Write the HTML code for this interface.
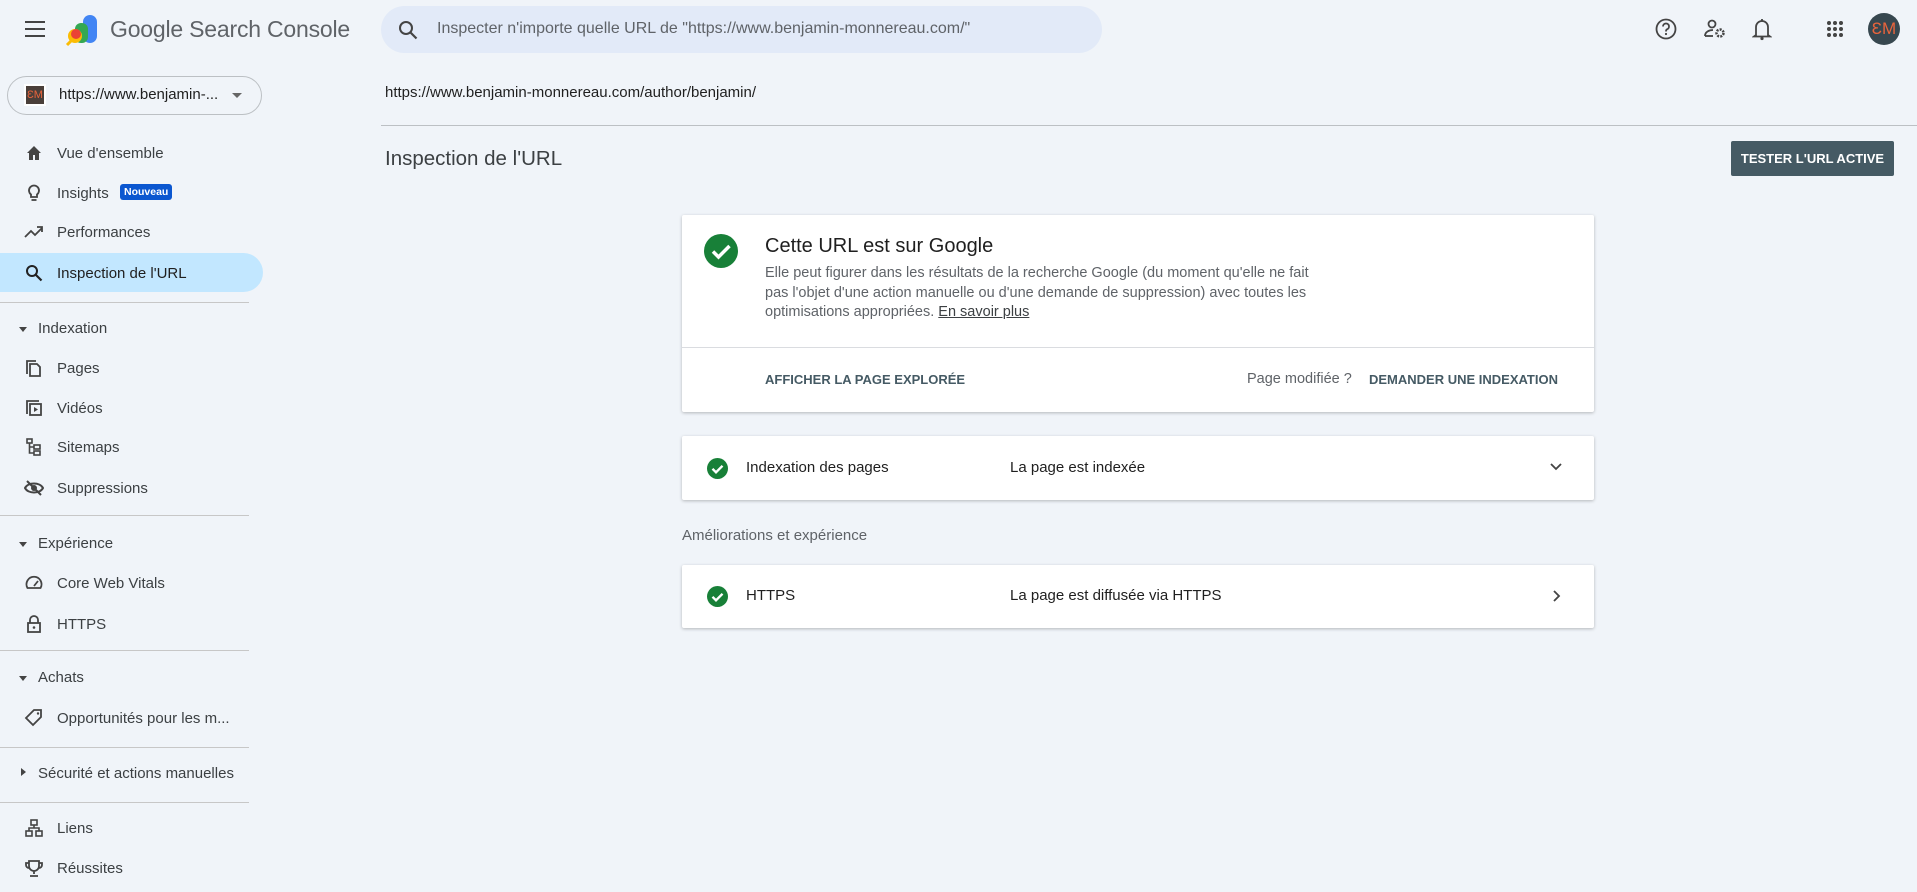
<!DOCTYPE html>
<html><head><meta charset="utf-8"><style>
*{box-sizing:border-box;margin:0;padding:0}
body{width:1917px;height:892px;overflow:hidden;background:#f0f4f9;font-family:"Liberation Sans",sans-serif;color:#1f1f1f;position:relative}
.a{position:absolute}
.nav{position:absolute;left:57px;font-size:15px;color:#3c4043;line-height:20px;margin-top:1px}
.ic{position:absolute;left:24px;width:20px;height:20px}
.sec{position:absolute;left:38px;font-size:15px;color:#3c4043;line-height:20px;margin-top:1px}
.tri{position:absolute;left:19px;width:0;height:0;border-left:4px solid transparent;border-right:4px solid transparent;border-top:5px solid #444}
.sep{position:absolute;left:0;width:249px;height:1px;background:#c7c7c7}
.card{position:absolute;left:682px;width:912px;background:#fff;border-radius:2px;box-shadow:0 1px 3px rgba(0,0,0,.25)}
.btn{font-size:13px;font-weight:bold;color:#455a64;letter-spacing:0}
</style></head><body>
<svg class="a" style="left:24px;top:20px" width="22" height="18" viewBox="0 0 22 18"><path d="M1 2h20M1 9h20M1 16h20" stroke="#444" stroke-width="2"/></svg>
<svg class="a" style="left:65px;top:15px" width="34" height="32" viewBox="0 0 34 32"><rect x="18" y="0" width="14" height="28" rx="7" fill="#4285f4"/><rect x="10" y="8" width="13" height="20" rx="6" fill="#34a853"/><circle cx="10" cy="21" r="7" fill="#fbbc04"/><circle cx="11" cy="19" r="5" fill="#ea4335"/><path d="M2 30l6-6" stroke="#fbbc04" stroke-width="3"/></svg>
<div class="a" style="left:110px;top:16px;font-size:23px;color:#5f6368;letter-spacing:-.2px">Google Search Console</div>
<div class="a" style="left:381px;top:6px;width:721px;height:47px;border-radius:24px;background:#e2eaf8"></div>
<svg class="a" style="left:398px;top:20px" width="20" height="20" viewBox="0 0 20 20"><circle cx="8" cy="8" r="6" fill="none" stroke="#444" stroke-width="2"/><path d="M12.5 12.5l6 6" stroke="#444" stroke-width="2.2"/></svg>
<div class="a" style="left:437px;top:20px;font-size:16px;color:#5f6368">Inspecter n'importe quelle URL de "https://www.benjamin-monnereau.com/"</div>
<svg class="a" style="left:1655px;top:18px" width="22" height="22" viewBox="0 0 22 22"><circle cx="11" cy="11" r="9.5" fill="none" stroke="#444" stroke-width="1.8"/><path d="M8 8.5a3 3 0 1 1 4 2.8c-1 .5-1 1-1 2.2" fill="none" stroke="#444" stroke-width="1.8"/><circle cx="11" cy="16" r="1.1" fill="#444"/></svg>
<svg class="a" style="left:1703px;top:18px" width="24" height="22" viewBox="0 0 24 22"><circle cx="9" cy="6" r="3.5" fill="none" stroke="#444" stroke-width="1.8"/><path d="M2 18c0-4 4-6 8-6" fill="none" stroke="#444" stroke-width="1.8"/><path d="M2 18h8" stroke="#444" stroke-width="1.8"/><circle cx="17" cy="15" r="3.5" fill="none" stroke="#444" stroke-width="2.5" stroke-dasharray="2 1.2"/></svg>
<svg class="a" style="left:1752px;top:17px" width="20" height="24" viewBox="0 0 20 24"><path d="M4 18V10a6 6 0 0 1 12 0v8l2 1.5H2z" fill="none" stroke="#444" stroke-width="1.8"/><circle cx="10" cy="21.5" r="1.6" fill="#444"/><path d="M10 2v2" stroke="#444" stroke-width="1.8"/></svg>
<svg class="a" style="left:1826px;top:20px" width="18" height="18" viewBox="0 0 18 18" fill="#444"><circle cx="3" cy="3" r="2"/><circle cx="9" cy="3" r="2"/><circle cx="15" cy="3" r="2"/><circle cx="3" cy="9" r="2"/><circle cx="9" cy="9" r="2"/><circle cx="15" cy="9" r="2"/><circle cx="3" cy="15" r="2"/><circle cx="9" cy="15" r="2"/><circle cx="15" cy="15" r="2"/></svg>
<div class="a" style="left:1868px;top:13px;width:32px;height:32px;border-radius:50%;background:#37474f;color:#e8643c;font-size:17px;text-align:center;line-height:32px">ƐM</div>

<div class="a" style="left:7px;top:76px;width:255px;height:39px;border:1px solid #bcc0c4;border-radius:20px"></div>
<div class="a" style="left:24px;top:84px;width:22px;height:22px;background:#fff;padding:2px"><div style="width:18px;height:18px;background:#4a3f3a;color:#e8643c;font-size:11px;line-height:18px;text-align:center">ƐM</div></div>
<div class="a" style="left:59px;top:86px;font-size:15px;color:#1f1f1f">https://www.benjamin-...</div>
<div class="a" style="left:232px;top:93px;border-left:5px solid transparent;border-right:5px solid transparent;border-top:5px solid #666"></div>

<div class="a" style="left:0;top:253px;width:263px;height:39px;background:#c2e7ff;border-radius:0 20px 20px 0"></div>
<svg class="ic" style="top:143px" viewBox="0 0 20 20"><path d="M3 10l7-7 7 7h-2v7h-4v-5H9v5H5v-7z" fill="#444"/></svg>
<div class="nav" style="top:143px">Vue d'ensemble</div>
<svg class="ic" style="top:183px" viewBox="0 0 20 20"><path d="M7 14v-2.5A5 5 0 1 1 13 11.5V14z" fill="none" stroke="#444" stroke-width="1.8"/><path d="M7.5 17h5" stroke="#444" stroke-width="1.8"/></svg>
<div class="nav" style="top:183px">Insights</div>
<div class="a" style="left:120px;top:184px;background:#0b57d0;color:#fff;font-size:10.5px;font-weight:bold;padding:2px 4px;border-radius:3px">Nouveau</div>
<svg class="ic" style="top:222px" viewBox="0 0 20 20"><path d="M1 15l6-6 4 4 7-7M13 5h5v5" fill="none" stroke="#444" stroke-width="1.8"/></svg>
<div class="nav" style="top:222px">Performances</div>
<svg class="ic" style="top:263px" viewBox="0 0 20 20"><circle cx="8" cy="8" r="5" fill="none" stroke="#222" stroke-width="2"/><path d="M11.5 11.5l6 6" stroke="#222" stroke-width="2.2"/></svg>
<div class="nav" style="top:263px;color:#1f1f1f">Inspection de l'URL</div>
<div class="sep" style="top:302px"></div>
<div class="tri" style="top:327px"></div><div class="sec" style="top:318px">Indexation</div>
<svg class="ic" style="top:358px" viewBox="0 0 20 20"><path d="M3 16V3h9" fill="none" stroke="#444" stroke-width="1.8"/><path d="M6 6h7l3 3v9H6z" fill="none" stroke="#444" stroke-width="1.8"/></svg>
<div class="nav" style="top:358px">Pages</div>
<svg class="ic" style="top:398px" viewBox="0 0 20 20"><path d="M3 16V3h12" fill="none" stroke="#444" stroke-width="1.8"/><rect x="6" y="6" width="11" height="11" fill="none" stroke="#444" stroke-width="1.8"/><path d="M10 9l4 2.5-4 2.5z" fill="#444"/></svg>
<div class="nav" style="top:398px">Vidéos</div>
<svg class="ic" style="top:437px" viewBox="0 0 20 20"><rect x="3" y="2" width="5" height="4" fill="none" stroke="#444" stroke-width="1.6"/><rect x="10" y="8" width="6" height="4" fill="none" stroke="#444" stroke-width="1.6"/><rect x="10" y="14" width="6" height="4" fill="none" stroke="#444" stroke-width="1.6"/><path d="M5.5 6v10H10M5.5 10H10" fill="none" stroke="#444" stroke-width="1.6"/></svg>
<div class="nav" style="top:437px">Sitemaps</div>
<svg class="ic" style="top:478px" viewBox="0 0 20 20"><path d="M1 10c3-6 15-6 18 0-3 6-15 6-18 0z" fill="none" stroke="#444" stroke-width="2"/><circle cx="10" cy="10" r="3" fill="#444"/><path d="M3 3l14 14" stroke="#444" stroke-width="2"/></svg>
<div class="nav" style="top:478px">Suppressions</div>
<div class="sep" style="top:515px"></div>
<div class="tri" style="top:542px"></div><div class="sec" style="top:533px">Expérience</div>
<svg class="ic" style="top:573px" viewBox="0 0 20 20"><path d="M3.5 15a7.5 7.5 0 1 1 13 0z" fill="none" stroke="#444" stroke-width="1.8"/><path d="M10 13l4-5" stroke="#444" stroke-width="1.8"/></svg>
<div class="nav" style="top:573px">Core Web Vitals</div>
<svg class="ic" style="top:614px" viewBox="0 0 20 20"><path d="M6 9V6a4 4 0 0 1 8 0v3" fill="none" stroke="#444" stroke-width="1.8"/><rect x="4" y="9" width="12" height="9" fill="none" stroke="#444" stroke-width="1.8"/><circle cx="10" cy="13.5" r="1.3" fill="#444"/></svg>
<div class="nav" style="top:614px">HTTPS</div>
<div class="sep" style="top:650px"></div>
<div class="tri" style="top:676px"></div><div class="sec" style="top:667px">Achats</div>
<svg class="ic" style="top:708px" viewBox="0 0 20 20"><path d="M10 2h7v7l-8 8-7-7z" fill="none" stroke="#444" stroke-width="1.8"/><circle cx="14" cy="5.5" r="1.2" fill="#444"/></svg>
<div class="nav" style="top:708px">Opportunités pour les m...</div>
<div class="sep" style="top:747px"></div>
<div class="a" style="left:21px;top:768px;border-top:4px solid transparent;border-bottom:4px solid transparent;border-left:5px solid #444"></div>
<div class="sec" style="top:763px">Sécurité et actions manuelles</div>
<div class="sep" style="top:802px"></div>
<svg class="ic" style="top:818px" viewBox="0 0 20 20"><rect x="7" y="2" width="6" height="5" fill="none" stroke="#444" stroke-width="1.6"/><rect x="2" y="13" width="6" height="5" fill="none" stroke="#444" stroke-width="1.6"/><rect x="12" y="13" width="6" height="5" fill="none" stroke="#444" stroke-width="1.6"/><path d="M10 7v3M5 13v-3h10v3" fill="none" stroke="#444" stroke-width="1.6"/></svg>
<div class="nav" style="top:818px">Liens</div>
<svg class="ic" style="top:858px" viewBox="0 0 20 20"><path d="M5 3h10v5a5 5 0 0 1-10 0zM5 5H2v2a3 3 0 0 0 3 3M15 5h3v2a3 3 0 0 1-3 3M10 13v3M6 18h8" fill="none" stroke="#444" stroke-width="1.8"/></svg>
<div class="nav" style="top:858px">Réussites</div>

<div class="a" style="left:385px;top:84px;font-size:15px;color:#1f1f1f">https://www.benjamin-monnereau.com/author/benjamin/</div>
<div class="a" style="left:381px;top:125px;width:1536px;height:1px;background:#bcc0c4"></div>
<div class="a" style="left:385px;top:147px;font-size:20.5px;color:#3c4043">Inspection de l'URL</div>
<div class="a" style="left:1731px;top:141px;width:163px;height:35px;background:#455a64;color:#fff;font-size:13px;font-weight:bold;text-align:center;line-height:35px;border-radius:2px">TESTER L'URL ACTIVE</div>

<div class="card" style="top:215px;height:197px">
  <svg class="a" style="left:22px;top:19px" width="34" height="34" viewBox="0 0 34 34"><circle cx="17" cy="17" r="17" fill="#188038"/><path d="M9 17.5l5.5 5.5 11-11" fill="none" stroke="#fff" stroke-width="3.5"/></svg>
  <div class="a" style="left:83px;top:20px;font-size:20px;color:#1f1f1f">Cette URL est sur Google</div>
  <div class="a" style="left:83px;top:49px;width:565px;font-size:14.5px;line-height:19.7px;color:#5f6368">Elle peut figurer dans les résultats de la recherche Google (du moment qu'elle ne fait pas l'objet d'une action manuelle ou d'une demande de suppression) avec toutes les optimisations appropriées. <u style="color:#3c4043">En savoir plus</u></div>
  <div class="a" style="left:0;top:132px;width:912px;height:1px;background:#dadce0"></div>
  <div class="a btn" style="left:83px;top:157px">AFFICHER LA PAGE EXPLORÉE</div>
  <div class="a" style="left:565px;top:156px;font-size:14.5px;color:#5f6368">Page modifiée ?</div>
  <div class="a btn" style="left:687px;top:157px">DEMANDER UNE INDEXATION</div>
</div>

<div class="card" style="top:436px;height:64px">
  <svg class="a" style="left:25px;top:22px" width="21" height="21" viewBox="0 0 21 21"><circle cx="10.5" cy="10.5" r="10.5" fill="#188038"/><path d="M5.5 10.8l3.5 3.5 6.5-6.5" fill="none" stroke="#fff" stroke-width="2.4"/></svg>
  <div class="a" style="left:64px;top:23px;font-size:15px">Indexation des pages</div>
  <div class="a" style="left:328px;top:23px;font-size:15px">La page est indexée</div>
  <svg class="a" style="left:867px;top:26px" width="14" height="10" viewBox="0 0 14 10"><path d="M2 2l5 5 5-5" fill="none" stroke="#444" stroke-width="1.8"/></svg>
</div>

<div class="a" style="left:682px;top:527px;font-size:15px;color:#5f6368">Améliorations et expérience</div>

<div class="card" style="top:565px;height:63px">
  <svg class="a" style="left:25px;top:21px" width="21" height="21" viewBox="0 0 21 21"><circle cx="10.5" cy="10.5" r="10.5" fill="#188038"/><path d="M5.5 10.8l3.5 3.5 6.5-6.5" fill="none" stroke="#fff" stroke-width="2.4"/></svg>
  <div class="a" style="left:64px;top:22px;font-size:15px">HTTPS</div>
  <div class="a" style="left:328px;top:22px;font-size:15px">La page est diffusée via HTTPS</div>
  <svg class="a" style="left:870px;top:24px" width="10" height="14" viewBox="0 0 10 14"><path d="M2 2l5 5-5 5" fill="none" stroke="#444" stroke-width="1.8"/></svg>
</div>
</body></html>
